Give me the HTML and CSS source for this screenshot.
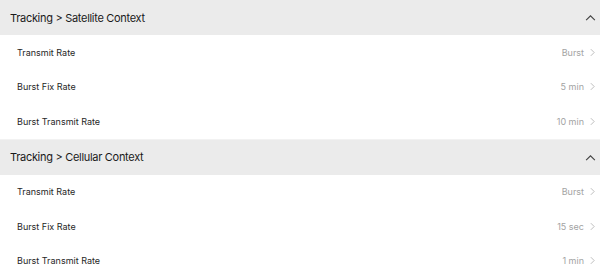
FILE: index.html
```html
<!DOCTYPE html>
<html lang="en">
<head>
<meta charset="UTF-8">
<title>Tracking Settings</title>
<meta name="viewport" content="width=device-width,initial-scale=1">
<link rel="stylesheet" href="styles.css">
</head>
<body>
  <!-- Satellite -->
  <section class="group">
    <div class="group-head">
      <span>Tracking &gt; Satellite Context</span>
      <svg class="up" viewBox="0 0 12 8"><path d="M1 7 L6 2 L11 7"/></svg>
    </div>
    <div class="row"><span class="label">Transmit Rate</span><span class="value">Burst</span><svg class="chev" viewBox="0 0 6 10"><path d="M1 1 L5 5 L1 9"/></svg></div>
    <div class="row"><span class="label">Burst Fix Rate</span><span class="value">5 min</span><svg class="chev" viewBox="0 0 6 10"><path d="M1 1 L5 5 L1 9"/></svg></div>
    <div class="row"><span class="label">Burst Transmit Rate</span><span class="value">10 min</span><svg class="chev" viewBox="0 0 6 10"><path d="M1 1 L5 5 L1 9"/></svg></div>
  </section>

  <!-- Cellular -->
  <section class="group">
    <div class="group-head">
      <span>Tracking &gt; Cellular Context</span>
      <svg class="up" viewBox="0 0 12 8"><path d="M1 7 L6 2 L11 7"/></svg>
    </div>
    <div class="row"><span class="label">Transmit Rate</span><span class="value">Burst</span><svg class="chev" viewBox="0 0 6 10"><path d="M1 1 L5 5 L1 9"/></svg></div>
    <div class="row"><span class="label">Burst Fix Rate</span><span class="value">15 sec</span><svg class="chev" viewBox="0 0 6 10"><path d="M1 1 L5 5 L1 9"/></svg></div>
    <div class="row"><span class="label">Burst Transmit Rate</span><span class="value">1 min</span><svg class="chev" viewBox="0 0 6 10"><path d="M1 1 L5 5 L1 9"/></svg></div>
  </section>
</body>
</html>
```

FILE: styles.css
```css
:root{font-family:Inter,"Noto Sans",sans-serif}
body{margin:0;background:#fff;color:#222}

/* ─────────── GROUP HEADER ─────────── */
.group + .group{border-top:1px solid #f2f2f2}
.group-head{display:flex;align-items:center;justify-content:space-between;
            height:35px;padding:0 4px 0 10px;background:#ebebeb;
            font-size:11px;letter-spacing:-.3px;color:#1a1a1a}
.up{width:11px;height:7px;fill:none;stroke:#444;stroke-width:1.3}

/* ─────────── ROWS ─────────── */
.row{display:flex;align-items:center;height:34.5px;padding:0 5px 0 17px;
     font-size:9px}
.label{flex:1;color:#262626}
.value{color:#a3a3a3;margin-right:6px}
.chev{width:5px;height:9px;fill:none;stroke:#b8b8b8;stroke-width:1.1}
```
